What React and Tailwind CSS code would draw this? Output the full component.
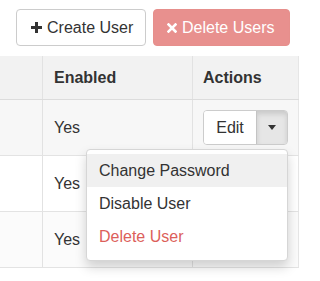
import React from 'react';

const PlusIcon = () => (
  <svg width="11" height="11" viewBox="0 0 11 11" className="shrink-0">
    <path d="M4 0h3v4h4v3H7v4H4V7H0V4h4z" fill="#333" />
  </svg>
);

const RemoveIcon = () => (
  <svg width="10" height="10" viewBox="0 0 10 10" className="shrink-0">
    <path d="M1.5 1.5l7 7M8.5 1.5l-7 7" stroke="#fff" strokeWidth="2.6" strokeLinecap="square" />
  </svg>
);

const App = () => {
  const rows = [
    { id: 1, enabled: 'Yes', bg: 'bg-[#f7f7f7]', open: true },
    { id: 2, enabled: 'Yes', bg: 'bg-white' },
    { id: 3, enabled: 'Yes', bg: 'bg-[#fbfbfb]' }
  ];

  return (
    <div className="w-[320px] h-[281px] bg-white overflow-hidden text-[#333] font-['Liberation_Sans',Arial,sans-serif] text-[16px]">
      {/* Toolbar */}
      <div className="flex gap-[7px] pl-[16px] pt-[9px]">
        <button className="flex items-center gap-[5px] h-[37px] w-[130px] pl-[14px] border border-[#ccc] rounded-[4px] bg-white text-[#333]">
          <PlusIcon />
          <span>Create User</span>
        </button>
        <button className="flex items-center gap-[5px] h-[37px] w-[137px] pl-[13px] border border-[#e68f8c] rounded-[4px] bg-[#e8908e] text-white">
          <RemoveIcon />
          <span>Delete Users</span>
        </button>
      </div>

      {/* Table */}
      <div className="mt-[10px] w-[299px]">
        <div className="grid grid-cols-[43px_150px_106px] h-[44px] bg-[#f2f2f2] border-b border-[#dcdcdc] font-bold">
          <div className="border-r border-[#e2e2e2]" />
          <div className="flex items-center pl-[11px] border-r border-[#e2e2e2]">Enabled</div>
          <div className="flex items-center pl-[10px] border-r border-[#e6e6e6]">Actions</div>
        </div>
        {rows.map((row) => (
          <div key={row.id} className={`grid grid-cols-[43px_150px_106px] h-[56px] border-b border-[#e3e3e3] ${row.bg}`}>
            <div className="border-r border-[#e2e2e2]" />
            <div className="flex items-center pl-[11px] border-r border-[#e2e2e2]">{row.enabled}</div>
            <div className="relative border-r border-[#e6e6e6]">
              {row.open && (
                <div className="absolute left-[10px] top-[10px] w-[85px]">
                  <div className="flex h-[35px] border border-[#ccc] rounded-[4px] overflow-hidden">
                    <div className="w-[53px] flex items-center justify-center bg-white border-r border-[#c4c4c4]">Edit</div>
                    <div className="flex-1 flex items-center justify-center bg-[#e6e6e6] shadow-[inset_0_3px_5px_rgba(0,0,0,0.125)]">
                      <span className="block w-0 h-0 border-l-[4px] border-r-[4px] border-t-[5px] border-l-transparent border-r-transparent border-t-[#333]" />
                    </div>
                  </div>
                  <div className="absolute right-0 top-[39px] z-10 w-[202px] pt-[4px] pb-[7px] bg-white border border-[#d6d6d6] rounded-[4px] shadow-[0_6px_12px_rgba(0,0,0,0.175)]">
                    <div className="h-[33px] flex items-center pl-[12px] bg-[#f0f0f0] text-[#333]">Change Password</div>
                    <div className="h-[33px] flex items-center pl-[12px] text-[#333]">Disable User</div>
                    <div className="h-[33px] flex items-center pl-[12px] text-[#dc5f5b]">Delete User</div>
                  </div>
                </div>
              )}
            </div>
          </div>
        ))}
      </div>
    </div>
  );
};

export default App;
